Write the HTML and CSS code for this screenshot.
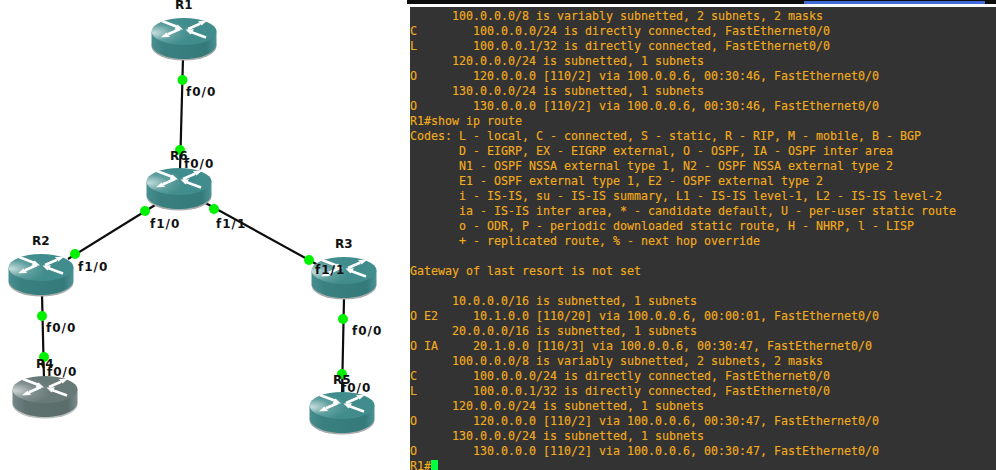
FILE: index.html
```html
<!DOCTYPE html>
<html lang="en">
<head>
<meta charset="utf-8">
<title>GNS3 OSPF topology</title>
<link rel="stylesheet" href="styles.css">
</head>
<body>
<div class="page">
<svg class="topology" width="407" height="470" viewBox="0 0 407 470" xmlns="http://www.w3.org/2000/svg">
  <defs>
    <linearGradient id="bodyTeal" x1="0" x2="1" y1="0" y2="0">
      <stop offset="0" stop-color="#4a8f90"/>
      <stop offset="0.2" stop-color="#3a8081"/>
      <stop offset="0.85" stop-color="#347a7a"/>
      <stop offset="1" stop-color="#4f9494"/>
    </linearGradient>
    <radialGradient id="topTeal" cx="0.04" cy="0.55" r="0.55">
      <stop offset="0" stop-color="#c4dcdc"/>
      <stop offset="0.55" stop-color="#5f9f9f"/>
      <stop offset="1" stop-color="#418c8c"/>
    </radialGradient>
    <linearGradient id="bodyGrey" x1="0" x2="1" y1="0" y2="0">
      <stop offset="0" stop-color="#75868a"/>
      <stop offset="0.2" stop-color="#5f7270"/>
      <stop offset="0.85" stop-color="#5a6d6b"/>
      <stop offset="1" stop-color="#7b8c8b"/>
    </linearGradient>
    <radialGradient id="topGrey" cx="0.04" cy="0.55" r="0.55">
      <stop offset="0" stop-color="#cdd5d4"/>
      <stop offset="0.55" stop-color="#808f8e"/>
      <stop offset="1" stop-color="#687a78"/>
    </radialGradient>
    <g id="arrows" class="arrows">
      <line x1="37" y1="11" x2="49" y2="5.800"/>
      <path d="M56 2.800 L47 3 L50.500 7.500 Z"/>
      <line x1="29" y1="11" x2="17" y2="16.200"/>
      <path d="M10 19.200 L19 19 L15.500 14.500 Z"/>
      <line x1="11" y1="3" x2="26" y2="8.800"/>
      <path d="M32 11.500 L23.500 11.500 L26.500 6.500 Z"/>
      <line x1="55" y1="19.500" x2="40" y2="14"/>
      <path d="M34.500 11.500 L43 11.200 L39.500 16.500 Z"/>
    </g>
    <g id="router-teal">
      <ellipse cx="33" cy="28.500" rx="32.500" ry="14" fill="#a9acac"/>
      <path d="M0.500 13.500 V26.500 C0.500 34 15 41 33 41 C51 41 65.500 34 65.500 26.500 V13.500 Z" fill="url(#bodyTeal)"/>
      <ellipse cx="33" cy="13.500" rx="32.500" ry="13.500" fill="url(#topTeal)"/>
      <use href="#arrows"/>
    </g>
    <g id="router-grey">
      <ellipse cx="33" cy="28.500" rx="32.500" ry="14" fill="#bcbebe"/>
      <path d="M0.500 13.500 V26.500 C0.500 34 15 41 33 41 C51 41 65.500 34 65.500 26.500 V13.500 Z" fill="url(#bodyGrey)"/>
      <ellipse cx="33" cy="13.500" rx="32.500" ry="13.500" fill="url(#topGrey)"/>
      <use href="#arrows"/>
    </g>
  </defs>

  <g class="links">
    <line x1="183" y1="58" x2="180" y2="170"/>
    <line x1="160" y1="202" x2="68" y2="259"/>
    <line x1="200" y1="200" x2="318" y2="265"/>
    <line x1="42" y1="294" x2="44" y2="380"/>
    <line x1="344" y1="298" x2="342" y2="395"/>
  </g>

  <use href="#router-teal" x="151" y="18"/>
  <use href="#router-teal" x="146" y="168"/>
  <use href="#router-teal" x="8" y="254"/>
  <use href="#router-teal" x="311" y="257"/>
  <use href="#router-grey" x="12" y="376"/>
  <use href="#router-teal" x="309" y="392"/>

  <g class="dots">
    <circle cx="182.500" cy="80" r="5"/>
    <circle cx="180" cy="150" r="5"/>
    <circle cx="145" cy="211" r="5"/>
    <circle cx="214" cy="209" r="5"/>
    <circle cx="75" cy="254" r="5"/>
    <circle cx="309" cy="260" r="5"/>
    <circle cx="42" cy="316" r="5"/>
    <circle cx="44" cy="357" r="5"/>
    <circle cx="343" cy="319" r="5"/>
    <circle cx="342" cy="374" r="5"/>
  </g>

  <g class="names">
    <text x="175" y="9">R1</text>
    <text x="170" y="160">R6</text>
    <text x="32" y="245">R2</text>
    <text x="335" y="248">R3</text>
    <text x="36" y="368">R4</text>
    <text x="333" y="384">R5</text>
  </g>
  <g class="ports">
    <text x="186" y="96">f0/0</text>
    <text x="184" y="168">f0/0</text>
    <text x="150" y="228">f1/0</text>
    <text x="216" y="228">f1/1</text>
    <text x="78" y="271">f1/0</text>
    <text x="315" y="274">f1/1</text>
    <text x="46" y="332">f0/0</text>
    <text x="47" y="376">f0/0</text>
    <text x="352" y="335">f0/0</text>
    <text x="341" y="392">f0/0</text>
  </g>
</svg>

<section class="console">
  <div class="titlebar"><span class="titlebar-accent"></span></div>
  <div class="terminal"><pre class="output">      100.0.0.0/8 is variably subnetted, 2 subnets, 2 masks
C        100.0.0.0/24 is directly connected, FastEthernet0/0
L        100.0.0.1/32 is directly connected, FastEthernet0/0
      120.0.0.0/24 is subnetted, 1 subnets
O        120.0.0.0 [110/2] via 100.0.0.6, 00:30:46, FastEthernet0/0
      130.0.0.0/24 is subnetted, 1 subnets
O        130.0.0.0 [110/2] via 100.0.0.6, 00:30:46, FastEthernet0/0
R1#show ip route
Codes: L - local, C - connected, S - static, R - RIP, M - mobile, B - BGP
       D - EIGRP, EX - EIGRP external, O - OSPF, IA - OSPF inter area
       N1 - OSPF NSSA external type 1, N2 - OSPF NSSA external type 2
       E1 - OSPF external type 1, E2 - OSPF external type 2
       i - IS-IS, su - IS-IS summary, L1 - IS-IS level-1, L2 - IS-IS level-2
       ia - IS-IS inter area, * - candidate default, U - per-user static route
       o - ODR, P - periodic downloaded static route, H - NHRP, l - LISP
       + - replicated route, % - next hop override

Gateway of last resort is not set

      10.0.0.0/16 is subnetted, 1 subnets
O E2     10.1.0.0 [110/20] via 100.0.0.6, 00:00:01, FastEthernet0/0
      20.0.0.0/16 is subnetted, 1 subnets
O IA     20.1.0.0 [110/3] via 100.0.0.6, 00:30:47, FastEthernet0/0
      100.0.0.0/8 is variably subnetted, 2 subnets, 2 masks
C        100.0.0.0/24 is directly connected, FastEthernet0/0
L        100.0.0.1/32 is directly connected, FastEthernet0/0
      120.0.0.0/24 is subnetted, 1 subnets
O        120.0.0.0 [110/2] via 100.0.0.6, 00:30:47, FastEthernet0/0
      130.0.0.0/24 is subnetted, 1 subnets
O        130.0.0.0 [110/2] via 100.0.0.6, 00:30:47, FastEthernet0/0
R1#<span class="cursor"></span></pre></div>
</section>
</div>
</body>
</html>
```

FILE: styles.css
```css
html, body {
  margin: 0;
  padding: 0;
  background: #fff;
  overflow: hidden;
}

.page {
  display: flex;
  width: 996px;
  height: 470px;
  overflow: hidden;
}

.topology {
  flex: 0 0 407px;
  display: block;
}

.links line {
  stroke: #0d0d0d;
  stroke-width: 2.2;
}

.arrows {
  fill: #fff;
  stroke: #fff;
}

.arrows line {
  stroke-width: 2.6;
}

.arrows path {
  stroke: none;
}

.dots circle {
  fill: #00f200;
}

.names text {
  font: bold 12px "DejaVu Sans", sans-serif;
  fill: #111;
}

.ports text {
  font: bold 12px "DejaVu Sans", sans-serif;
  letter-spacing: 1px;
  fill: #111;
}

.console {
  flex: 1;
  display: flex;
  flex-direction: column;
  min-width: 0;
}

.titlebar {
  display: flex;
  justify-content: flex-end;
  height: 4px;
  background: #0d0d0d;
  padding-right: 11px;
}

.titlebar-accent {
  width: 181px;
  height: 3px;
  margin-top: 1px;
  background: #4169d8;
}

.terminal {
  flex: 1;
  margin: 3px 0 0 3px;
  padding: 2px 0 0;
  background: #333;
  overflow: hidden;
}

.output {
  margin: 0;
  font-family: "DejaVu Sans Mono", monospace;
  font-size: 11.63px;
  line-height: 15px;
  color: #f2ab1c;
  -webkit-text-stroke: 0.15px #f2ab1c;
  white-space: pre;
}

.cursor {
  display: inline-block;
  width: 7px;
  height: 12px;
  background: #00ff3c;
  vertical-align: -2px;
}
```
